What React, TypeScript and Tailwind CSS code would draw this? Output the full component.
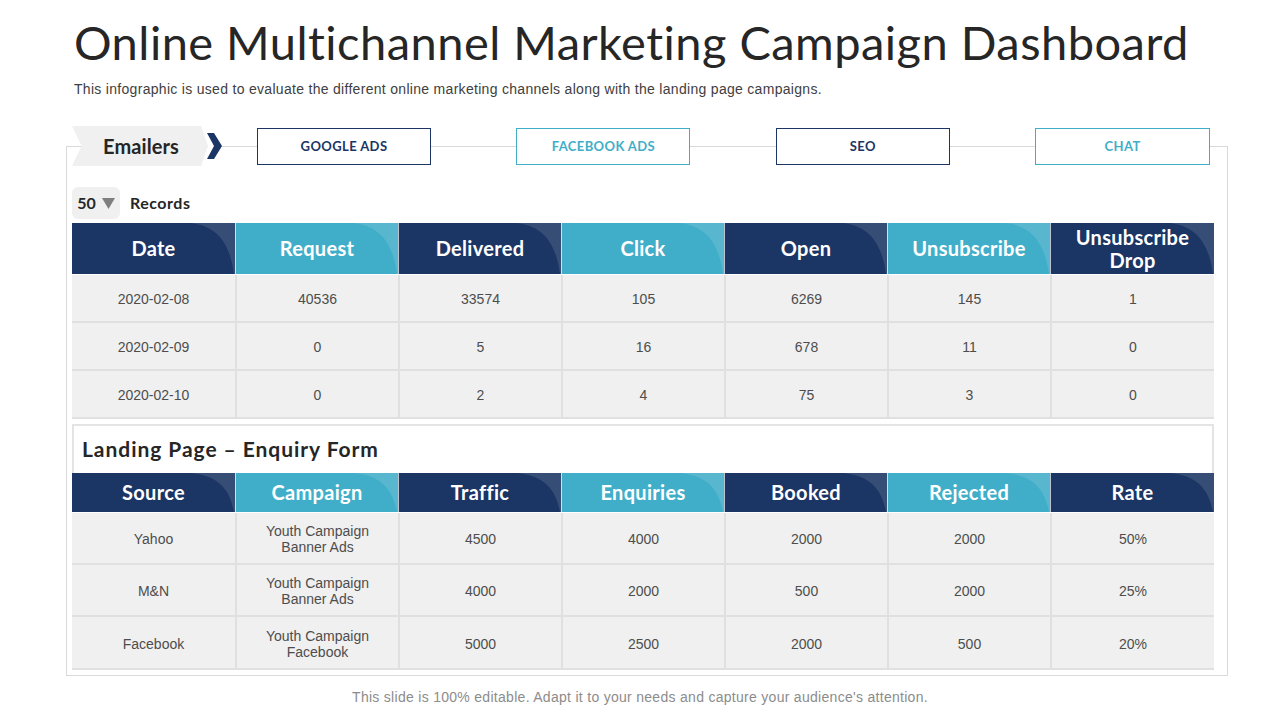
import React from 'react';

const emailHead = ['Date', 'Request', 'Delivered', 'Click', 'Open', 'Unsubscribe', 'Unsubscribe Drop'];
const emailRows = [
  ['2020-02-08', '40536', '33574', '105', '6269', '145', '1'],
  ['2020-02-09', '0', '5', '16', '678', '11', '0'],
  ['2020-02-10', '0', '2', '4', '75', '3', '0'],
];
const landingHead = ['Source', 'Campaign', 'Traffic', 'Enquiries', 'Booked', 'Rejected', 'Rate'];
const landingRows = [
  ['Yahoo', 'Youth Campaign Banner Ads', '4500', '4000', '2000', '2000', '50%'],
  ['M&N', 'Youth Campaign Banner Ads', '4000', '2000', '500', '2000', '25%'],
  ['Facebook', 'Youth Campaign Facebook', '5000', '2500', '2000', '500', '20%'],
];
const tabs = [
  { label: 'GOOGLE ADS', dark: true },
  { label: 'FACEBOOK ADS', dark: false },
  { label: 'SEO', dark: true },
  { label: 'CHAT', dark: false },
];

function HeadRow({ cols, height }: { cols: string[]; height: string }) {
  return (
    <div className={`grid grid-cols-[repeat(6,163px)_1fr] ${height}`}>
      {cols.map((c, i) => (
        <div
          key={c}
          className={`relative flex items-center justify-center overflow-hidden border-l border-white/70 first:border-l-0 text-center text-[20px] leading-[23px] font-bold tracking-[0.3px] text-white ${i % 2 === 0 ? 'bg-[#1b3564]' : 'bg-[#41aec9]'}`}
        >
          <svg className="absolute right-0 top-0 h-full w-[44px]" viewBox="0 0 44 50" preserveAspectRatio="none">
            <path d="M0 0 C22 3 38 14 43 50 L44 50 L44 0 Z" fill="#ffffff" fillOpacity="0.12" />
          </svg>
          <span className="relative w-[130px]">{c}</span>
        </div>
      ))}
    </div>
  );
}

function BodyRow({ cells, height }: { cells: string[]; height: string }) {
  return (
    <div className={`grid grid-cols-[repeat(6,163px)_1fr] ${height} border-b-2 border-[#e0e0e0] bg-[#f0f0f0]`}>
      {cells.map((c, i) => (
        <div
          key={i}
          className="flex items-center justify-center border-l-2 border-[#e0e0e0] first:border-l-0 pt-[2px] text-center font-['Liberation_Sans',sans-serif] text-[14px] leading-[16px] text-[#4d4d4d]"
        >
          <span className={c.startsWith('Youth') ? 'w-[120px]' : ''}>{c}</span>
        </div>
      ))}
    </div>
  );
}

export default function App() {
  return (
    <div className="h-[720px] w-[1280px] overflow-hidden bg-white font-['Lato',sans-serif]">
      {/* Title */}
      <h1 className="pl-[74px] pt-[14px] text-[47px] leading-[56px] font-normal tracking-[0.47px] text-[#262626]">
        Online Multichannel Marketing Campaign Dashboard
      </h1>
      <p className="mt-[9px] pl-[74px] font-['Liberation_Sans',sans-serif] text-[14px] leading-[20px] tracking-[0.3px] text-[#404040]">
        This infographic is used to evaluate the different online marketing channels along with the landing page campaigns.
      </p>

      {/* Frame */}
      <div className="ml-[66px] mt-[47px] h-[530px] w-[1162px] border border-[#d9d9d9]">
        <div className="-mt-[21px] flex items-start pl-[5px]">
          <div className="flex h-[40px] w-[136px] items-center justify-center bg-[#f0f0f0] pl-[2px] text-[20px] font-bold tracking-[0.1px] text-[#262626] [clip-path:polygon(0_0,95%_0,100%_50%,95%_100%,0_100%,7%_50%)]">
            Emailers
          </div>
          <div className="flex h-[40px] w-[14px] items-center justify-start bg-white">
            <svg className="-ml-[1px]" width="15" height="26" viewBox="0 0 15 26">
              <path d="M0 0 H7 L15 13 L7 26 H0 L7 13 Z" fill="#1b3564" />
            </svg>
          </div>
          {tabs.map((t, i) => (
            <div
              key={t.label}
              className={`mt-[2px] flex h-[37px] items-center justify-center border bg-white text-[13px] font-bold tracking-[0.4px] ${i === 3 ? 'w-[175px]' : 'w-[174px]'} ${i === 0 ? 'ml-[35px]' : 'ml-[85.4px]'} ${t.dark ? 'border-[#1b3564] text-[#1b3564]' : 'border-[#41aec9] text-[#41aec9]'}`}
            >
              {t.label}
            </div>
          ))}
        </div>

        <div className="pl-[5px] pr-[13px]">
          <div className="mt-[21px] flex items-center">
            <div className="flex h-[32px] w-[48px] items-center justify-center gap-[6px] rounded-[6px] bg-[#f0f0f0] text-[16px] font-bold text-[#262626]">
              50
              <svg width="13" height="11" viewBox="0 0 13 11">
                <path d="M0 0 H13 L6.5 11 Z" fill="#7f7f7f" />
              </svg>
            </div>
            <span className="ml-[10px] text-[16px] font-bold tracking-[0.5px] text-[#262626]">Records</span>
          </div>

          <div className="mt-[4px]">
            <HeadRow cols={emailHead} height="h-[51px]" />
            <div className="h-px" />
            {emailRows.map((r) => (
              <BodyRow key={r[0]} cells={r} height="h-[48px]" />
            ))}
          </div>

          <div className="mt-[5px] flex h-[49px] items-center border-2 border-b-0 border-[#e4e4e4] pb-[2px] pl-[8px] text-[21px] font-bold tracking-[0.95px] text-[#262626]">
            Landing Page – Enquiry Form
          </div>
          <HeadRow cols={landingHead} height="h-[39px]" />
          <div className="h-px" />
          {landingRows.map((r, i) => (
            <BodyRow key={r[0]} cells={r} height={i === 2 ? 'h-[53px]' : 'h-[52px]'} />
          ))}
        </div>
      </div>

      <p className="mt-[12px] text-center font-['Liberation_Sans',sans-serif] text-[14px] leading-[18px] tracking-[0.29px] text-[#8c8c8c]">
        This slide is 100% editable. Adapt it to your needs and capture your audience's attention.
      </p>
    </div>
  );
}
